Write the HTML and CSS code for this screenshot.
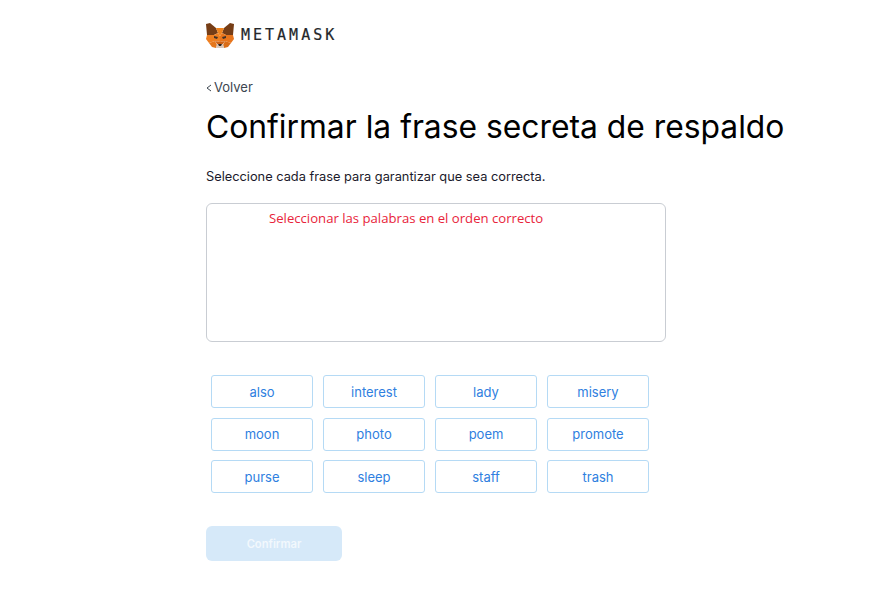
FILE: index.html
```html
<!DOCTYPE html>
<html lang="es">
<head>
    <meta charset="UTF-8">
    <meta name="viewport" content="width=device-width, initial-scale=1.0">
    <title>MetaMask</title>
    <link rel="stylesheet" href="styles.css">
</head>
<body>
    <div class="page">
        <div class="brand">
            <svg class="fox" width="28" height="25" viewBox="0 0 28 25">
                <polygon points="0,1 4,0 10,5 12,10 8,12 1,12" fill="#763d16"/>
                <polygon points="28,1 24,0 18,5 16,10 20,12 27,12" fill="#763d16"/>
                <polygon points="10,5 18,5 16,10 14,13 12,10" fill="#f0841f"/>
                <polygon points="1,12 8,12 12,10 14,13 14,19 9,18 3,20 0,16" fill="#ef7f20"/>
                <polygon points="27,12 20,12 16,10 14,13 14,19 19,18 25,20 28,16" fill="#e8751c"/>
                <polygon points="8,13 12,14 11,16 8,15" fill="#40302a"/>
                <polygon points="20,13 16,14 17,16 20,15" fill="#40302a"/>
                <polygon points="3,20 9,18 11,22 10,25 6,24" fill="#e4761b"/>
                <polygon points="25,20 19,18 17,22 18,25 22,24" fill="#d96d18"/>
                <polygon points="9,18 14,19 19,18 17,21 11,21" fill="#cd6116"/>
                <polygon points="11,21 17,21 18,25 10,25" fill="#d9c6b8"/>
                <polygon points="12,21 16,21 15,23 13,23" fill="#33241c"/>
            </svg>
            <span class="wordmark">METAMASK</span>
        </div>

        <a class="back" href="#">
            <svg class="chevron" width="6" height="8" viewBox="0 0 6 8">
                <polyline points="5,1 1,4 5,7" fill="none" stroke="#3c4650" stroke-width="1"/>
            </svg>
            Volver
        </a>
        <h1>Confirmar la frase secreta de respaldo</h1>
        <p class="intro">Seleccione cada frase para garantizar que sea correcta.</p>

        <div class="drop-box">
            <span class="hint">Seleccionar las palabras en el orden correcto</span>
        </div>

        <div class="words">
            <button class="word">also</button>
            <button class="word">interest</button>
            <button class="word">lady</button>
            <button class="word">misery</button>
            <button class="word">moon</button>
            <button class="word">photo</button>
            <button class="word">poem</button>
            <button class="word">promote</button>
            <button class="word">purse</button>
            <button class="word">sleep</button>
            <button class="word">staff</button>
            <button class="word">trash</button>
        </div>

        <button class="confirm" disabled>Confirmar</button>
    </div>
</body>
</html>
```

FILE: styles.css
```css
body {
    margin: 0;
    background: #fff;
    font-family: Inter, "Open Sans", sans-serif;
    color: #000;
}
.page {
    padding: 22px 0 0 206px;
}
.brand {
    display: flex;
    align-items: center;
    gap: 7px;
    height: 26px;
}
.wordmark {
    font-family: "DejaVu Sans Mono", monospace;
    font-size: 15px;
    letter-spacing: 3px;
    color: #24272a;
    -webkit-text-stroke: 0.2px #24272a;
}
.back {
    display: flex;
    align-items: center;
    gap: 2px;
    margin-top: 31px;
    font-size: 13px;
    line-height: 17px;
    color: #3c4650;
    text-decoration: none;
}
h1 {
    margin: 8px 0 0;
    font-size: 31.8px;
    font-weight: 400;
    line-height: 46px;
    white-space: nowrap;
}
.intro {
    margin: 18px 0 0;
    font-size: 12.8px;
    line-height: 18px;
    color: #1b1a2b;
}
.drop-box {
    box-sizing: border-box;
    width: 460px;
    height: 139px;
    margin-top: 17px;
    padding: 3px 0 0 62px;
    border: 1px solid #c9cdd3;
    border-radius: 6px;
}
.hint {
    font-family: "Open Sans", sans-serif;
    font-size: 13.15px;
    line-height: 17px;
    color: #e8233a;
}
.words {
    display: grid;
    grid-template-columns: repeat(4, 102px);
    grid-auto-rows: 33px;
    column-gap: 10px;
    row-gap: 9.5px;
    margin: 33px 0 0 5px;
}
.word {
    padding: 0;
    background: #fff;
    border: 1px solid #b5daf5;
    border-radius: 3px;
    font-family: Inter, "Open Sans", sans-serif;
    font-size: 13px;
    color: #2f80e0;
}
.confirm {
    display: block;
    width: 136px;
    height: 35px;
    margin-top: 33px;
    padding: 0;
    background: #d6e9f9;
    border: none;
    border-radius: 6px;
    font-family: Inter, "Open Sans", sans-serif;
    font-size: 11.2px;
    font-weight: 600;
    color: #f2f8fd;
}
```
